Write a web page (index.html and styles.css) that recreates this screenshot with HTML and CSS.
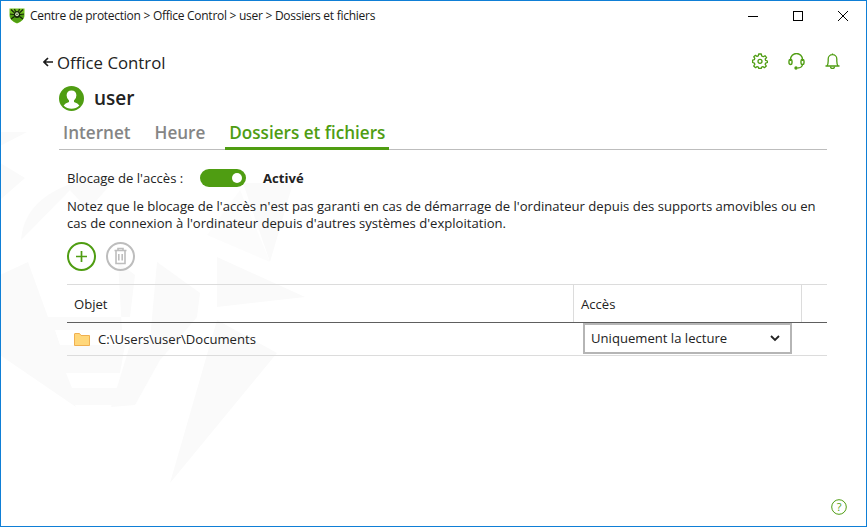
FILE: index.html
```html
<!DOCTYPE html>
<html lang="fr">
<head>
<meta charset="utf-8">
<title>Office Control</title>
<link rel="stylesheet" href="styles.css">
</head>
<body>
<div class="window">
  <svg class="watermark" width="867" height="527" viewBox="0 0 867 527" fill="#fafafa">
    <path d="M0 132 L27 132 L0 146Z"/>
    <path d="M0 163 L25 178 L0 200Z"/>
    <path d="M21 240 Q25 190 100 176 L118 176 L88 210 L70 190 Z"/>
    <path d="M243 183 L293 183 L270 262Z"/>
    <path d="M207 235 L240 190 L270 262Z" opacity=".6"/>
    <path d="M0 275 L28 262 L48 317 L130 317 L135 275 L118 262 L122 330 L55 330 L60 345 L125 345 L120 373 L66 373 L72 388 L118 388 L112 405 L75 405 L76 407 L0 355Z"/>
    <path d="M157 262 L200 293 L197 317 L160 360 L135 405 L111 407 L130 345 L150 340Z"/>
    <path d="M217 257 L305 297 L217 307Z"/>
    <path d="M217 320 L277 353 L170 483Z"/>
  </svg>

  <header class="titlebar">
    <svg class="logo" width="16" height="16" viewBox="0 0 16 16">
      <path d="M0.5 0.5 H15.5 V8 Q15 13 8 15.5 Q1 13 0.5 8Z" fill="#72bf21"/>
      <path d="M1 6 H15 V8 Q14.5 12.5 8 15 Q1.5 12.5 1 8Z" fill="#4f9d12"/>
      <g stroke="#14230a" stroke-width="1.1" fill="none">
        <path d="M2 1.5 L5 4.5 M14 1.5 L11 4.5 M5.5 1 L6.5 3.5 M10.5 1 L9.5 3.5 M1 6 L5 6.5 M15 6 L11 6.5 M2 11 L5.5 8.5 M14 11 L10.5 8.5"/>
      </g>
      <ellipse cx="8" cy="6.5" rx="3.2" ry="3.4" fill="#14230a"/>
      <ellipse cx="8" cy="6.3" rx="1.8" ry="2" fill="#d9edc0"/>
      <circle cx="8" cy="6.3" r="0.7" fill="#14230a"/>
    </svg>
    <span class="title-text">Centre de protection &gt; Office Control &gt; user &gt; Dossiers et fichiers</span>
    <div class="window-controls">
      <svg width="10" height="10" viewBox="0 0 10 10"><path d="M0 5.5 H10" stroke="#000"/></svg>
      <svg width="10" height="10" viewBox="0 0 10 10"><rect x="0.5" y="0.5" width="9" height="9" fill="none" stroke="#000"/></svg>
      <svg width="10" height="10" viewBox="0 0 10 10"><path d="M0 0 L10 10 M10 0 L0 10" stroke="#000" fill="none"/></svg>
    </div>
  </header>

  <main class="content">
    <div class="topbar">
      <div class="back">
        <svg class="back-arrow" width="10" height="10" viewBox="0 0 10 10"><path d="M10 5 H1.5 M5 1 L1 5 L5 9" fill="none" stroke="#1a1a1a" stroke-width="1.7"/></svg>
        <span>Office Control</span>
      </div>
      <div class="top-icons">
        <svg width="16" height="16" viewBox="0 0 16 16" fill="none" stroke="#4f9d12" stroke-width="1.3"><path d="M6.7 1 H9.3 L9.7 3 L11.3 3.7 L13 2.7 L14.6 4.6 L13.2 6 L13.6 7.4 L15.4 8 V9.5 L13.6 10.2 L13.2 11.3 L14.3 13 L12.4 14.7 L10.9 13.6 L9.6 14 L9.2 15.5 H6.8 L6.4 14 L5.1 13.6 L3.6 14.7 L1.7 13 L2.8 11.3 L2.4 10.2 L0.6 9.5 V7.2 L2.4 6.6 L2.8 5.4 L1.8 3.8 L3.5 2.3 L5 3.4 L6.3 2.9Z" stroke-linejoin="round"/><circle cx="8" cy="8.3" r="2"/></svg>
        <svg width="17" height="17" viewBox="0 0 17 17" fill="none" stroke="#4f9d12" stroke-width="1.4"><path d="M2.5 8 V6.5 A6 6 0 0 1 14.5 6.5 V8"/><rect x="1" y="6.5" width="3" height="5" rx="1.5"/><rect x="13" y="6.5" width="3" height="5" rx="1.5"/><path d="M14.5 11.5 Q14 15 9.5 15"/><circle cx="8" cy="15" r="1" fill="#4f9d12"/></svg>
        <svg width="15" height="16" viewBox="0 0 15 16" fill="none" stroke="#4f9d12" stroke-width="1.3"><path d="M0.5 13 H14.5 M2 13 Q3.2 11 3.2 8 V6 A4.3 4.3 0 0 1 11.8 6 V8 Q11.8 11 13 13 M7.5 1.7 V0.5"/><path d="M5.5 13.5 A2 2 0 0 0 9.5 13.5"/></svg>
      </div>
    </div>

    <div class="user">
      <svg width="25" height="25" viewBox="0 0 25 25">
        <circle cx="12.5" cy="12.5" r="12.5" fill="#4f9d12"/>
        <path d="M4.6 19.5 Q6 17.3 10 16 L10 14.6 Q7.6 12.6 7.6 9.2 Q7.8 4.4 12.5 4.4 Q17.2 4.4 17.4 9.2 Q17.4 12.6 15 14.6 L15 16 Q19 17.3 20.4 19.5 Q17 22.8 12.5 22.8 Q8 22.8 4.6 19.5Z" fill="#fff"/>
      </svg>
      <span>user</span>
    </div>

    <nav class="tabs">
      <a class="tab">Internet</a>
      <a class="tab">Heure</a>
      <a class="tab tab-active">Dossiers et fichiers</a>
    </nav>

    <section class="panel">
      <div class="lock-row">
        <span class="lock-label">Blocage de l'accès :</span>
        <span class="switch"><span class="knob"></span></span>
        <strong class="state">Activé</strong>
      </div>
      <p class="note">Notez que le blocage de l'accès n'est pas garanti en cas de démarrage de l'ordinateur depuis des supports amovibles ou en<br>cas de connexion à l'ordinateur depuis d'autres systèmes d'exploitation.</p>
      <div class="actions">
        <svg width="29" height="29" viewBox="0 0 29 29" fill="none" stroke="#4f9d12"><circle cx="14.5" cy="14.5" r="13.5" stroke-width="2"/><path d="M14.5 9 V20 M9 14.5 H20" stroke-width="1.7"/></svg>
        <svg width="29" height="29" viewBox="0 0 29 29" fill="none" stroke="#bdbdbd"><circle cx="14.5" cy="14.5" r="13.5" stroke-width="2"/><path d="M8.5 8.5 H20.5 M12 8.5 V6.5 H17 V8.5 M10 9 V21.5 H19 V9 M12.8 12 V18.5 M16.2 12 V18.5" stroke-width="1.6"/></svg>
      </div>
      <div class="table">
        <div class="head">
          <div class="th">Objet</div>
          <div class="th">Accès</div>
          <div class="th"></div>
        </div>
        <div class="row">
          <div class="path">
            <svg width="16" height="13" viewBox="0 0 16 13"><path d="M0.5 12.5 V1 Q0.5 0.5 1 0.5 H5.5 L7 2.5 H15.5 V12.5Z" fill="#ffd77a" stroke="#f0b050"/></svg>
            <span>C:\Users\user\Documents</span>
          </div>
          <div class="select-cell">
            <div class="select">
              <span class="select-text">Uniquement la lecture</span>
              <svg width="10" height="7" viewBox="0 0 10 7"><path d="M1 1 L5 5 L9 1" fill="none" stroke="#222" stroke-width="1.8"/></svg>
            </div>
          </div>
        </div>
      </div>
    </section>
  </main>

  <footer class="help">
    <svg width="16" height="16" viewBox="0 0 16 16" fill="none" stroke="#4f9d12"><circle cx="8" cy="8" r="7.3"/></svg>
    <span class="help-mark">?</span>
  </footer>
</div>
</body>
</html>
```
FILE: styles.css
```css
* { box-sizing: border-box; }
html, body { margin: 0; height: 100%; }
body {
  background: #fff;
  color: #222;
  font-family: "Open Sans", "Noto Sans", sans-serif;
  font-size: 13.1px;
  overflow: hidden;
}
.window {
  position: relative;
  width: 867px;
  height: 527px;
  border: 1px solid #0f7fd6;
  display: flex;
  flex-direction: column;
  overflow: hidden;
}
.watermark { position: absolute; left: -1px; top: -1px; }
.titlebar {
  position: relative;
  height: 30px;
  display: flex;
  align-items: center;
  padding-left: 8px;
  flex: none;
}
.logo { flex: none; }
.title-text { margin: -1px 0 0 5px; font-size: 12px; letter-spacing: -0.27px; color: #1a1a1a; }
.window-controls {
  margin: -1px 0 0 auto;
  display: flex;
  gap: 35px;
  padding-right: 18px;
}
.content {
  position: relative;
  flex: 1;
  padding: 20px 39px 0 42px;
}
.topbar { display: flex; justify-content: space-between; align-items: center; height: 22px; }
.back { display: flex; align-items: center; gap: 4px; font-size: 16.8px; font-weight: 500; color: #222; }
.top-icons { display: flex; gap: 20px; align-items: center; margin: -2px -13px 0 0; }
.user { display: flex; align-items: center; gap: 10px; margin: 12px 0 0 16px; height: 26px; font-size: 19px; font-weight: 600; color: #222; }
.tabs {
  display: flex;
  margin: 11px 0 0 16px;
  height: 28px;
  border-bottom: 1px solid #bdbdbd;
  width: 768px;
}
.tab {
  padding: 0 4px;
  margin-right: 16px;
  font-size: 17.1px;
  font-weight: 600;
  color: #858585;
  line-height: 22px;
}
.tab-active {
  color: #4f9d12;
  height: 28px;
  border-bottom: 3px solid #4f9d12;
}
.panel { margin-left: 24px; padding-top: 18px; }
.lock-row { display: flex; align-items: center; height: 20px; }
.lock-label { width: 133px; }
.switch {
  display: flex;
  justify-content: flex-end;
  align-items: center;
  width: 46px;
  height: 18px;
  padding-right: 4px;
  border-radius: 9px;
  background: #4f9d12;
}
.knob { width: 10px; height: 10px; border-radius: 50%; background: #fff; }
.state { margin-left: 17px; font-weight: 700; color: #222; }
.note { margin: 10px 0 0; height: 34px; line-height: 16.6px; white-space: nowrap; }
.actions { display: flex; gap: 10px; margin-top: 10px; }
.table { margin-top: 13px; width: 760px; }
.head {
  display: grid;
  grid-template-columns: 507px 228px 25px;
  height: 39px;
  border-top: 1px solid #dcdcdc;
  border-bottom: 1px solid #5e5e5e;
}
.th { display: flex; align-items: center; padding-left: 7px; border-right: 1px solid #dcdcdc; }
.th:last-child { border-right: 0; }
.row {
  display: grid;
  grid-template-columns: 507px 1fr;
  height: 33px;
  border-bottom: 1px solid #dcdcdc;
}
.path { display: flex; align-items: center; gap: 8px; padding-left: 7px; }
.select-cell { padding: 0 0 0 9px; }
.select {
  display: flex;
  align-items: center;
  justify-content: space-between;
  width: 209px;
  height: 31px;
  padding: 0 10px 0 6px;
  border: 2px solid #b5b5b5;
  background: #fff;
}
.select-text { margin-top: -1px; }
.help { position: absolute; left: 830px; top: 498px; width: 16px; height: 16px; }
.help svg { display: block; }
.help-mark {
  position: absolute;
  inset: 0;
  text-align: center;
  font-size: 11px;
  line-height: 16px;
  color: #4f9d12;
}
```
